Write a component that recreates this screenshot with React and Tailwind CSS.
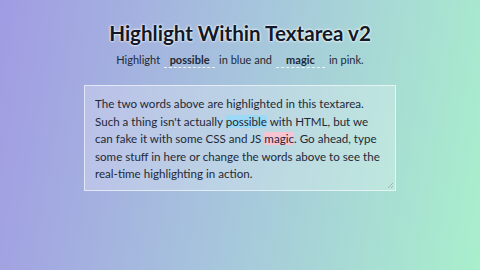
export default function App() {
  return (
    <div className="w-[480px] h-[270px] overflow-hidden bg-[linear-gradient(100deg,#a19be3_0%,#a6c6dc_50%,#a8efcc_100%)] font-['Lato','Noto_Sans',sans-serif] text-[#111827] flex flex-col items-center">
      <h1 className="mt-[20px] text-[20.6px] leading-[26px] font-bold [text-shadow:0_0_3px_#fff,0_0_2px_#fff]">
        Highlight Within Textarea v2
      </h1>
      <p className="mt-[6px] text-[11px] leading-[16px] text-[#1f2937] flex items-center">
        Highlight
        <span className="mx-[4px] w-[51px] text-center font-bold border-b border-dashed border-white/80 leading-[14px]">possible</span>
        in blue and
        <span className="mx-[4px] w-[49px] text-center font-bold border-b border-dashed border-white/80 leading-[14px]">magic</span>
        in pink.
      </p>
      <div className="relative mt-[17px] w-[312px] h-[106px] bg-white/25 border border-white/60 px-[10px] py-[9px] text-[11.6px] leading-[17.5px] text-[#1f2937]">
        The two words above are highlighted in this textarea. Such a thing isn't actually{' '}
        <mark className="bg-[#9cd9f6] text-[#1f2937] rounded-[2px]">possible</mark> with HTML, but we can fake it with some CSS and JS{' '}
        <mark className="bg-[#f8c4d2] text-[#1f2937] rounded-[2px]">magic</mark>. Go ahead, type some stuff in here or change the words above to see the real-time highlighting in action.
        <svg className="absolute right-[1px] bottom-[1px]" width="7" height="7" viewBox="0 0 7 7">
          <path d="M6 1L1 6M6 4L4 6" stroke="#9ca3af" strokeWidth="0.8" />
        </svg>
      </div>
    </div>
  );
}
